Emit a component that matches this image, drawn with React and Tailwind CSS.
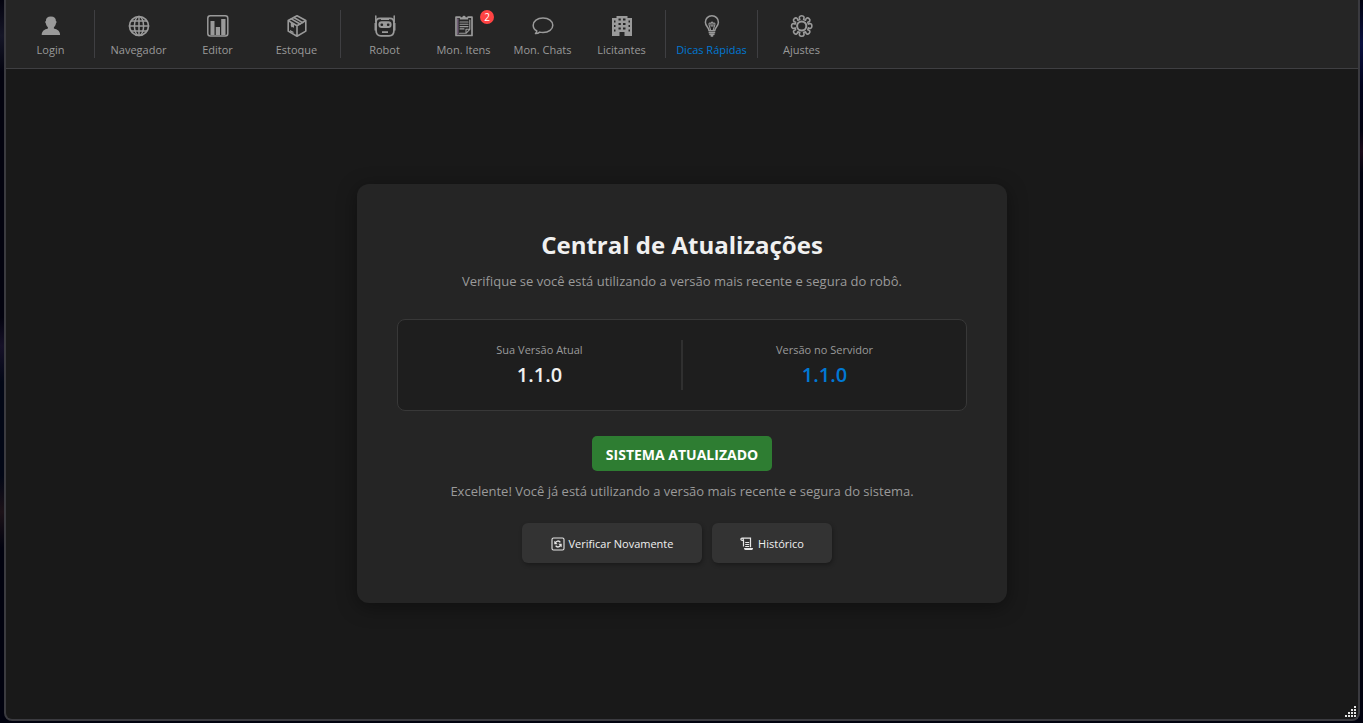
const ink = "#9a9a9a";

function Glyph({ children }) {
  return (
    <svg viewBox="0.5 0 24 24" className="size-6 shrink-0" fill="none" stroke={ink} strokeWidth="1.7" strokeLinejoin="round" strokeLinecap="round" aria-hidden="true">
      {children}
    </svg>
  );
}

const icons = {
  login: (
    <Glyph>
      <path stroke="none" fill={ink} d="M12.400 2.600c3.500 0 5 1.700 5 4.400.8 0 .9 1.900 0 2.500-.3 1.800-1 2.900-2 3.700v1.300c3.600 1 6.200 2.400 6.200 6.500H3.200c0-4.100 2.700-5.500 6.200-6.500v-1.300c-1-.8-1.700-1.900-2-3.700-.9-.6-.8-2.500 0-2.500 0-2.700 1.500-4.400 5-4.400z" />
    </Glyph>
  ),
  globe: (
    <Glyph>
      <circle cx="12.500" cy="12" r="9.500" />
      <ellipse cx="12.500" cy="12" rx="4.600" ry="9.500" strokeWidth="1.500" />
      <path strokeWidth="1.500" d="M12.500 2.500v19M3 12h19M4.800 7h15.400M4.800 17h15.400" />
    </Glyph>
  ),
  chart: (
    <Glyph>
      <rect x="2.300" y="1.700" width="20" height="20.300" rx="2.500" strokeWidth="1.500" />
      <path stroke="none" fill={ink} d="M5 7h4v14H5zM10.300 13h4.200v8h-4.200zM15.700 5h4.300v16h-4.300z" />
    </Glyph>
  ),
  box: (
    <Glyph>
      <path strokeWidth="1.600" d="M12.500 1.800 21.300 6.500v10.600L12.500 22.200 3.700 17.100V6.500zM3.700 6.500l8.800 5.200 8.800-5.200M12.500 11.700v10.500" />
      <path strokeWidth="1.500" d="M6.800 4.900l8.800 5.100M9.400 3.500l8.900 5.100" />
      <path stroke="none" fill={ink} d="M6.300 8.200l3.200 1.800v4l-1.200-1-1 .5-1-1.500zM5.500 16l3.500 1.800v1.400l-3.500-1.800z" />
    </Glyph>
  ),
  robot: (
    <Glyph>
      <path strokeWidth="1.700" d="M7.500 4.300h10c2.800 0 3.900 1.600 3.900 4.200v8.200c0 3.300-1.700 5.100-4.900 5.100h-8c-3.200 0-4.900-1.800-4.900-5.100V8.500c0-2.600 1.100-4.200 3.900-4.200z" />
      <path strokeWidth="1.500" d="M3.300 2v6M21.700 2v6" />
      <path stroke="none" fill={ink} d="M2 9h2v7.500H2zM21 9h2v7.500h-2zM9.500 17.200h6v1.900h-6zM8.500 4h8v2h-8z" />
      <rect x="5.900" y="7.300" width="13.200" height="6.800" rx="3.300" stroke="none" fill={ink} />
      <rect x="8" y="9.400" width="2.600" height="2.600" rx="1" fill="#252525" stroke="none" />
      <rect x="14.400" y="9.400" width="2.600" height="2.600" rx="1" fill="#252525" stroke="none" />
    </Glyph>
  ),
  clipboard: (
    <Glyph>
      <path strokeWidth="1.700" d="M8.500 3.200H4.500v18.300h16V3.200h-4" />
      <path strokeWidth="1.500" stroke="#75627a" d="M6.300 5v15" />
      <path stroke="none" fill={ink} d="M8.300 5.500V3.300h2.500c.2-2 3.200-2 3.400 0h2.500v2.200z" />
      <path strokeWidth="1.100" d="M8.500 8h8M8.500 10.300h8M8.500 12.600h8M8.500 14.900h4M18.300 6v9.300l-3.800 4H8M14.500 19.300v-4h3.800" />
    </Glyph>
  ),
  chat: (
    <Glyph>
      <path strokeWidth="1.500" d="M12.500 4c5.800 0 9.800 3.100 9.800 7.200s-4 7.300-9.800 7.300c-1.200 0-2.300-.1-3.300-.4-.9.800-2.200 1.400-4.200 1.500.8-.8 1.200-1.700 1.300-2.700C3.900 15.600 2.700 13.500 2.700 11.200 2.700 7.100 6.700 4 12.500 4z" />
    </Glyph>
  ),
  building: (
    <Glyph>
      <path stroke="none" fill={ink} fillRule="evenodd" d="M7 2h11v2h4.500v18H15v-4h-5v4H2.500V4H7zM4.500 6.500v2H6v-2zM4.500 11v2H6v-2zM4.500 15.500v2H6v-2zM9 4.500v2h2.300v-2zM13.500 4.500v2H16v-2zM9 9v2h2.300V9zM13.500 9v2H16V9zM9 13.500v2h2.300v-2zM13.500 13.500v2H16v-2zM19 6.500v2h1.500v-2zM19 11v2h1.500v-2zM19 15.500v2h1.500v-2z" />
    </Glyph>
  ),
  bulb: (
    <Glyph>
      <path strokeWidth="1.500" d="M9.500 16.700c0-3.300-3.600-4.300-3.600-8.500 0-3.700 2.800-6.400 6.500-6.400s6.500 2.700 6.500 6.400c0 4.200-3.600 5.200-3.600 8.500zM9.700 18.800h5.400M10.400 20.600h4M11.700 22h1.400" />
      <path strokeWidth="1.100" d="M11.100 16.200 9.500 10.600c-.4-1.700 1.600-2.200 2-.7.200-2.400 1.900-2.400 2 0 .4-1.500 2.300-1 1.900.7l-1.700 5.600M11.500 10v2h2v-2" />
    </Glyph>
  ),
  gear: (
    <Glyph>
      <circle cx="12.200" cy="12" r="4.600" strokeWidth="2" />
      <path strokeWidth="1.600" d="M10.300 5.400C9.300 3.500 9.800 1.800 12.200 1.800s2.900 1.700 1.900 3.600M16 6.200c.5-2.200 2-3 3.600-1.500s.8 3.100-1.300 3.600M18.800 10.100c1.900-1 3.600-.5 3.600 1.900s-1.700 2.900-3.600 1.900M18.300 15.700c2.100.5 2.900 2.100 1.300 3.600s-3.100.7-3.600-1.500M14.100 18.600c1 1.900.5 3.600-1.900 3.600s-2.900-1.700-1.900-3.600M8.400 17.800c-.5 2.200-2 3-3.600 1.500s-.8-3.100 1.300-3.600M5.600 13.900C3.700 14.900 2 14.400 2 12s1.700-2.900 3.600-1.900M6.100 8.300C4 7.800 3.200 6.200 4.800 4.700s3.100-.7 3.600 1.500M10.300 5.400l-1.900.8M14.100 5.400l1.900.8M18.300 8.300l.5 1.800M18.800 13.900l-.5 1.800M16 17.800l-1.900.8M10.300 18.600l-1.900-.8M6.100 15.700l-.5-1.800M5.600 10.100l.5-1.800" />
    </Glyph>
  ),
};

const groups = [
  [{ label: "Login", icon: "login" }],
  [
    { label: "Navegador", icon: "globe" },
    { label: "Editor", icon: "chart" },
    { label: "Estoque", icon: "box" },
  ],
  [
    { label: "Robot", icon: "robot" },
    { label: "Mon. Itens", icon: "clipboard", badge: 2 },
    { label: "Mon. Chats", icon: "chat" },
    { label: "Licitantes", icon: "building" },
  ],
  [{ label: "Dicas Rápidas", icon: "bulb", active: true }],
  [{ label: "Ajustes", icon: "gear" }],
];

function ToolButton({ label, icon, badge, active }) {
  return (
    <button
      type="button"
      className={
        "relative flex h-12 shrink-0 flex-col items-center gap-1 pt-1 text-[11px] leading-4 whitespace-nowrap " +
        (active ? "w-[79px] text-[#0078d4]" : "w-[75px] text-[#9a9a9a]")
      }
    >
      {icons[icon]}
      <span>{label}</span>
      {badge && (
        <span className="absolute top-0 right-[7px] flex size-3.5 items-center justify-center rounded-full bg-[#ff4343] text-[10px] leading-none text-white">
          {badge}
        </span>
      )}
    </button>
  );
}

function Toolbar() {
  return (
    <nav className="flex items-center gap-1 border-b border-[#3f3f42] bg-[#252525] px-[7px] py-2.5">
      {groups.map((group, i) => (
        <div key={i} className="flex items-center gap-1">
          {i > 0 && <span className="mx-0.5 h-12 w-px bg-[#3f3f42]" />}
          {group.map((item) => (
            <ToolButton key={item.label} {...item} />
          ))}
        </div>
      ))}
    </nav>
  );
}

function Version({ label, value, tone }) {
  return (
    <div className="flex flex-1 flex-col items-center">
      <span className="text-[11px] leading-5 text-[#9a9a9a]">{label}</span>
      <span className={"text-xl leading-[30px] font-semibold " + tone}>{value}</span>
    </div>
  );
}

function RefreshIcon() {
  return (
    <svg viewBox="0 0 14 14" className="size-3.5" fill="none" stroke="#e6e6e6" strokeWidth="1.100" aria-hidden="true">
      <rect x="1" y="1" width="12" height="12" rx="1.500" />
      <path d="M4.300 6.300c.4-2.600 3.800-3 5-1M9.700 7.700c-.4 2.600-3.800 3-5 1" strokeWidth="1.400" />
      <path d="M3.300 3.800v3.400h3.400zM10.700 10.200V6.800H7.300z" fill="#e6e6e6" stroke="none" />
    </svg>
  );
}

function ScrollIcon() {
  return (
    <svg viewBox="0 0 14 14" className="size-3.5" fill="none" stroke="#e6e6e6" strokeWidth="1.200" aria-hidden="true">
      <path d="M3.500 9.500V3.300C3.500.6.800.8.900 2.300c0 .9.600 1.200 2.300 1.200M2.300 1.200h8.200v9M5.200 5.500h4M5.200 7.500h4M5.200 9.500h4" />
      <path d="M4 11h9c0 1.400-.6 2-1.800 2H5.500C4.500 13 4 12.300 4 11z" fill="#e6e6e6" stroke="none" />
    </svg>
  );
}

function ActionButton({ children, width }) {
  return (
    <button
      type="button"
      className={
        "flex h-10 items-center justify-center gap-1 rounded-md bg-[#333333] pt-0.5 text-[11px] text-[#f0f0f0] shadow-[1px_2px_4px_rgba(0,0,0,0.3)] " + width
      }
    >
      {children}
    </button>
  );
}

function UpdateCard() {
  return (
    <section className="flex w-full max-w-[650px] flex-col items-center rounded-xl bg-[#252525] px-10 pt-[43px] pb-10 shadow-[0_4px_20px_rgba(0,0,0,0.4)]">
      <h1 className="text-2xl leading-9 font-bold text-[#f0f0f0]">Central de Atualizações</h1>
      <p className="mt-2 text-[13px] leading-5 text-[#9a9a9a]">
        Verifique se você está utilizando a versão mais recente e segura do robô.
      </p>
      <div className="mt-7 flex w-full items-stretch rounded-lg border border-[#383838] bg-[#1e1e1e] py-5">
        <Version label="Sua Versão Atual" value="1.1.0" tone="text-[#f0f0f0]" />
        <span className="w-0.5 bg-[#303030]" />
        <Version label="Versão no Servidor" value="1.1.0" tone="text-[#0078d4]" />
      </div>
      <div className="mt-[25px] flex h-[35px] w-[180px] items-center justify-center rounded-[5px] bg-[#2e7d32] pt-0.5 text-sm font-bold text-white">
        SISTEMA ATUALIZADO
      </div>
      <p className="mt-2.5 text-[13px] leading-5 text-[#9a9a9a]">
        Excelente! Você já está utilizando a versão mais recente e segura do sistema.
      </p>
      <div className="mt-[22px] flex gap-2.5 pr-2.5">
        <ActionButton width="w-[180px]">
          <RefreshIcon />
          Verificar Novamente
        </ActionButton>
        <ActionButton width="w-[120px]">
          <ScrollIcon />
          Histórico
        </ActionButton>
      </div>
    </section>
  );
}

function ResizeGrip() {
  return (
    <svg viewBox="0 0 12 12" className="absolute right-0.5 bottom-px size-3" fill="#e4e4e4" aria-hidden="true">
      <path d="M10 0h2v2h-2zM7 3h2v2H7zM10 3h2v2h-2zM4 6h2v2H4zM7 6h2v2H7zM10 6h2v2h-2zM1 9h2v2H1zM4 9h2v2H4zM7 9h2v2H7zM10 9h2v2h-2z" />
    </svg>
  );
}

export default function App() {
  return (
    <div className="flex min-h-screen bg-[#01020f] pb-0.5 font-['Open_Sans','Noto_Sans',sans-serif]">
      <div className="w-1 shrink-0 bg-[linear-gradient(to_bottom,#03030f_0%,#151627_5%,#03030f_10%,#03030f_44%,#161128_48%,#020716_53%,#020716_66%,#1c1218_71%,#01020f_76%)]" />
      <div className="relative flex flex-1 flex-col overflow-hidden rounded-b-lg border-x-2 border-b-2 border-[#3a3a3f] bg-[#191919]">
        <Toolbar />
        <main className="flex flex-1 items-center justify-center pb-px">
          <UpdateCard />
        </main>
        <ResizeGrip />
      </div>
      <div className="w-[3px] shrink-0 bg-[linear-gradient(to_bottom,#01020f_0%,#0a1040_6%,#02031c_12%,#01020f_18%,#1c0a18_21%,#01020f_24%)]" />
    </div>
  );
}
